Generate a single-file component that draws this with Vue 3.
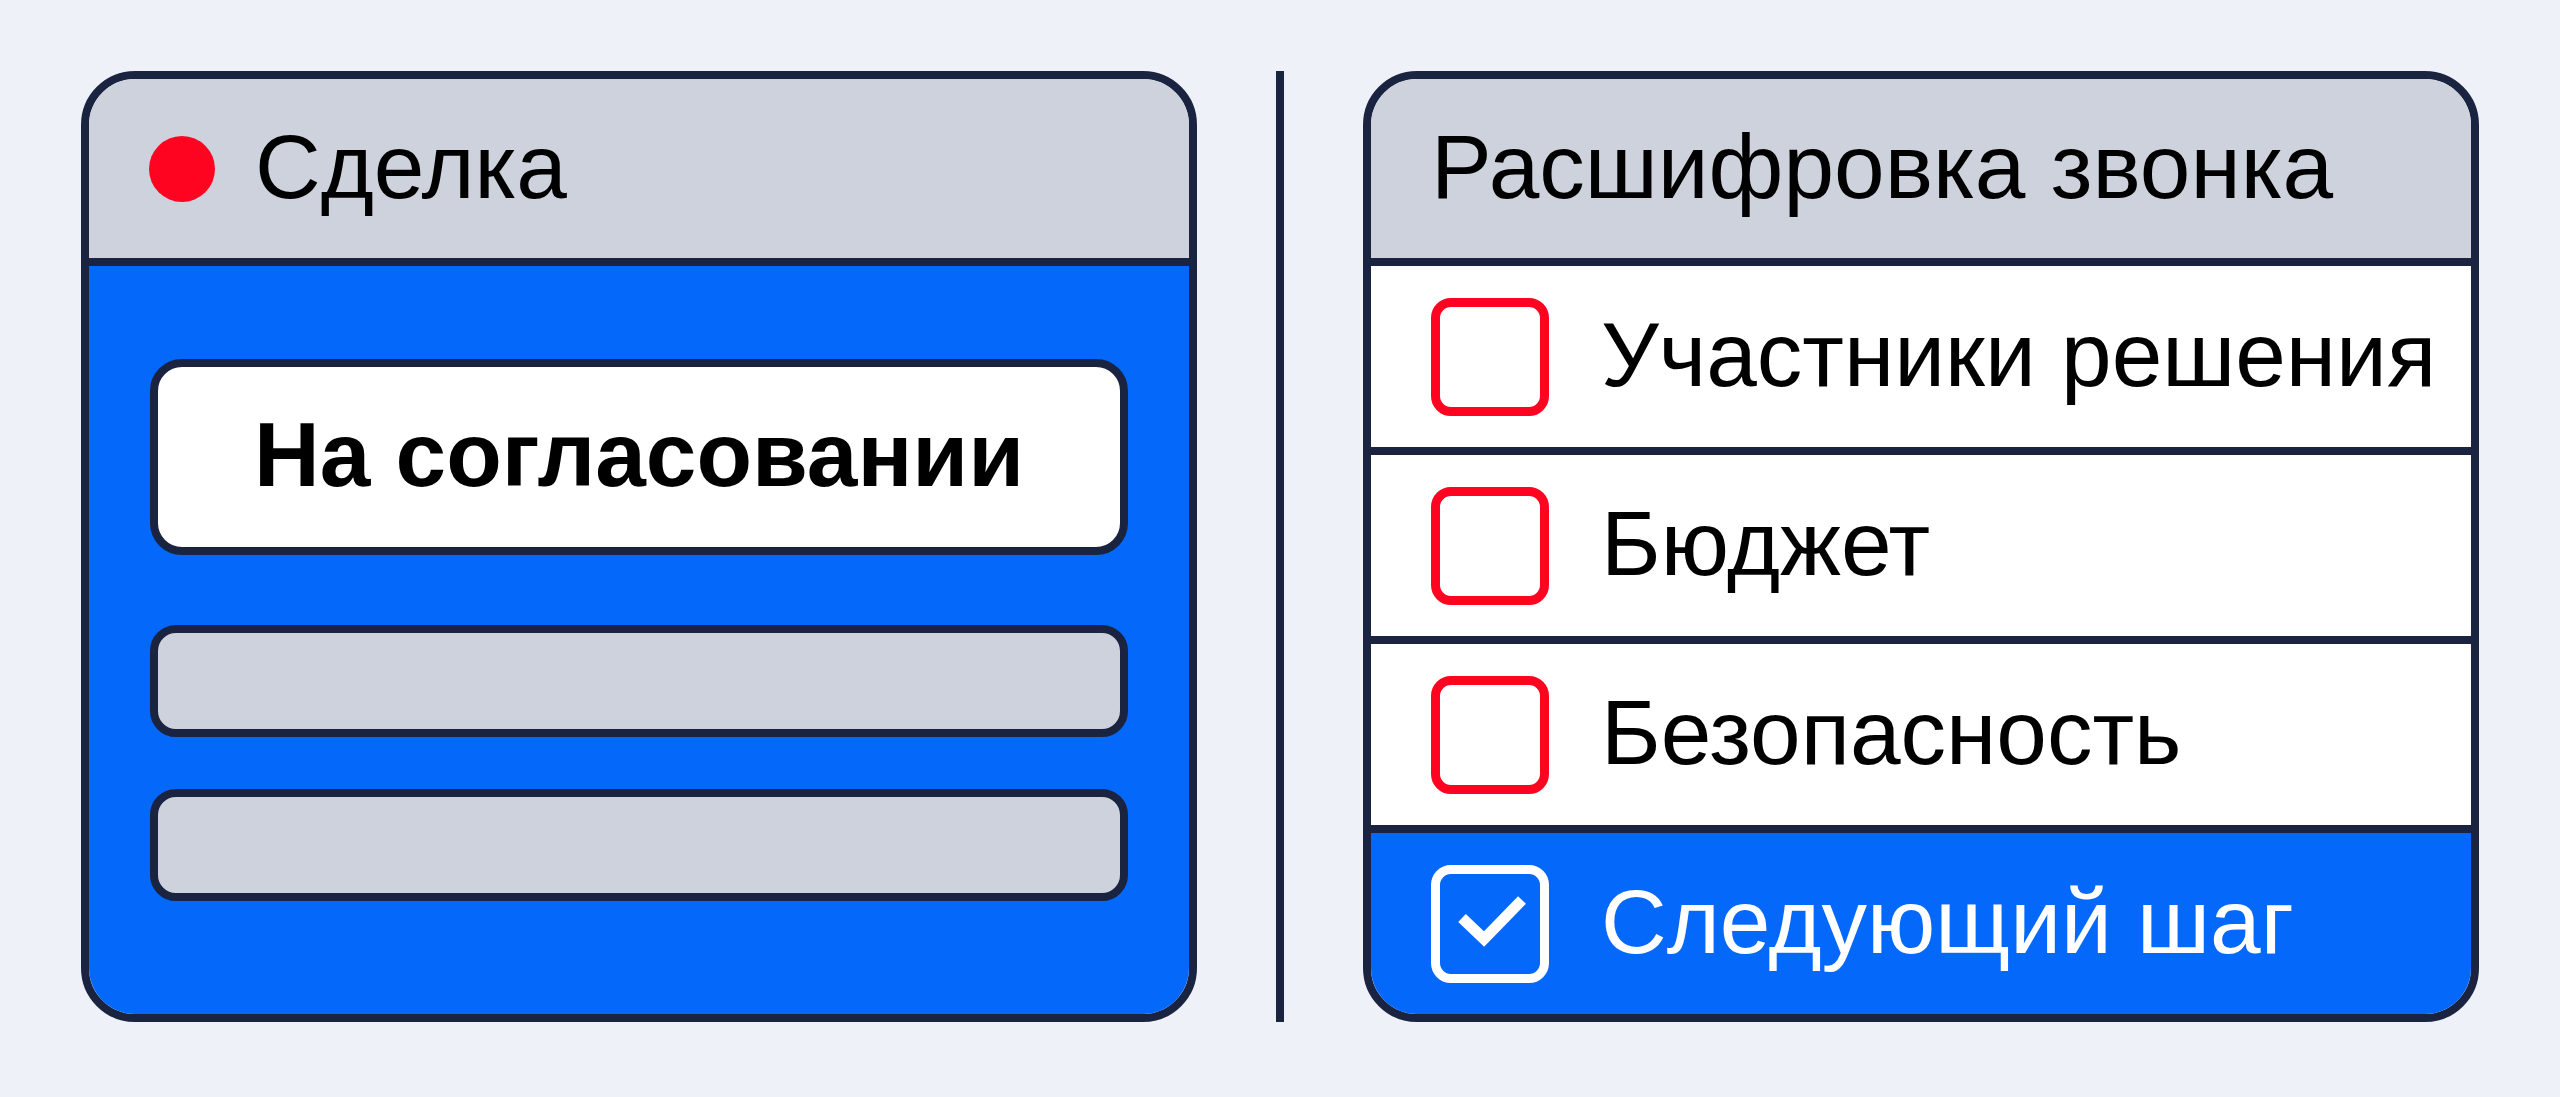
<script setup>
import { ref } from 'vue'

const deal = {
  title: 'Сделка',
  stage: 'На согласовании',
}

const steps = ref([
  { id: 'members', label: 'Участники решения', done: false },
  { id: 'budget', label: 'Бюджет', done: false },
  { id: 'security', label: 'Безопасность', done: false },
  { id: 'next', label: 'Следующий шаг', done: true },
])
</script>

<template>
  <main class="board">
    <section class="card deal">
      <header class="card-header">
        <span class="dot"></span>
        <h2>{{ deal.title }}</h2>
      </header>
      <div class="deal-body">
        <div class="stage">{{ deal.stage }}</div>
        <div class="bar"></div>
        <div class="bar"></div>
      </div>
    </section>

    <div class="divider"></div>

    <section class="card call">
      <header class="card-header">
        <h2>Расшифровка звонка</h2>
      </header>
      <ul class="steps">
        <li v-for="step in steps" :key="step.id" class="step" :class="{ done: step.done }">
          <span class="check">
            <input :id="step.id" v-model="step.done" type="checkbox" />
            <svg v-if="step.done" viewBox="0 0 118 118" aria-hidden="true">
              <path d="M31 53 53 74 91 35" />
            </svg>
          </span>
          <label :for="step.id">{{ step.label }}</label>
        </li>
      </ul>
    </section>
  </main>
</template>

<style>
body {
  margin: 0;
  background: #eef1f7;
}
</style>

<style scoped>
.board {
  --line: #1a2440;
  --blue: #0468fb;
  --grey: #cdd2dc;
  --red: #fe0420;
  display: grid;
  grid-template-columns: minmax(0, 1fr) 8px minmax(0, 1fr);
  gap: 79px;
  padding: 71px 81px;
  color: #000;
  font-family: 'Liberation Sans', Arial, sans-serif;
  font-size: 91px;
  line-height: 112px;
}
.divider {
  background: var(--line);
}
.card {
  display: flex;
  flex-direction: column;
  box-sizing: border-box;
  overflow: hidden;
  border: 8px solid var(--line);
  border-radius: 54px;
}
.card-header {
  display: flex;
  align-items: center;
  gap: 40px;
  box-sizing: border-box;
  min-height: 187px;
  padding: 0 60px;
  border-bottom: 8px solid var(--line);
  background: var(--grey);
}
.card-header h2 {
  margin: 0;
  padding-bottom: 4px;
  font-size: inherit;
  font-weight: 400;
  white-space: nowrap;
}
.dot {
  flex: none;
  width: 66px;
  height: 66px;
  border-radius: 50%;
  background: var(--red);
}
.deal-body {
  display: flex;
  flex: 1;
  flex-direction: column;
  gap: 52px;
  padding: 93px 61px 111px;
  background: var(--blue);
}
.stage {
  margin-bottom: 18px;
  padding: 32px 96px 36px;
  border: 8px solid var(--line);
  border-radius: 32px;
  background: #fff;
  font-weight: 700;
  white-space: nowrap;
}
.bar {
  box-sizing: border-box;
  height: 112px;
  border: 8px solid var(--line);
  border-radius: 26px;
  background: var(--grey);
}
.steps {
  margin: 0;
  padding: 0;
  list-style: none;
}
.step {
  display: flex;
  align-items: center;
  gap: 52px;
  min-height: 181px;
  padding: 0 60px;
  background: #fff;
}
.step + .step {
  border-top: 8px solid var(--line);
}
.step label {
  padding-bottom: 4px;
  white-space: nowrap;
}
.step.done {
  background: var(--blue);
  color: #fff;
}
.check {
  display: grid;
  flex: none;
  width: 118px;
  height: 118px;
}
.check input,
.check svg {
  grid-area: 1 / 1;
  width: 100%;
  height: 100%;
}
.check input {
  box-sizing: border-box;
  margin: 0;
  border: 9px solid var(--red);
  border-radius: 20px;
  appearance: none;
  cursor: pointer;
}
.done .check input {
  border-color: #fff;
}
.check svg {
  fill: none;
  stroke: #fff;
  stroke-width: 11;
  pointer-events: none;
}
</style>
